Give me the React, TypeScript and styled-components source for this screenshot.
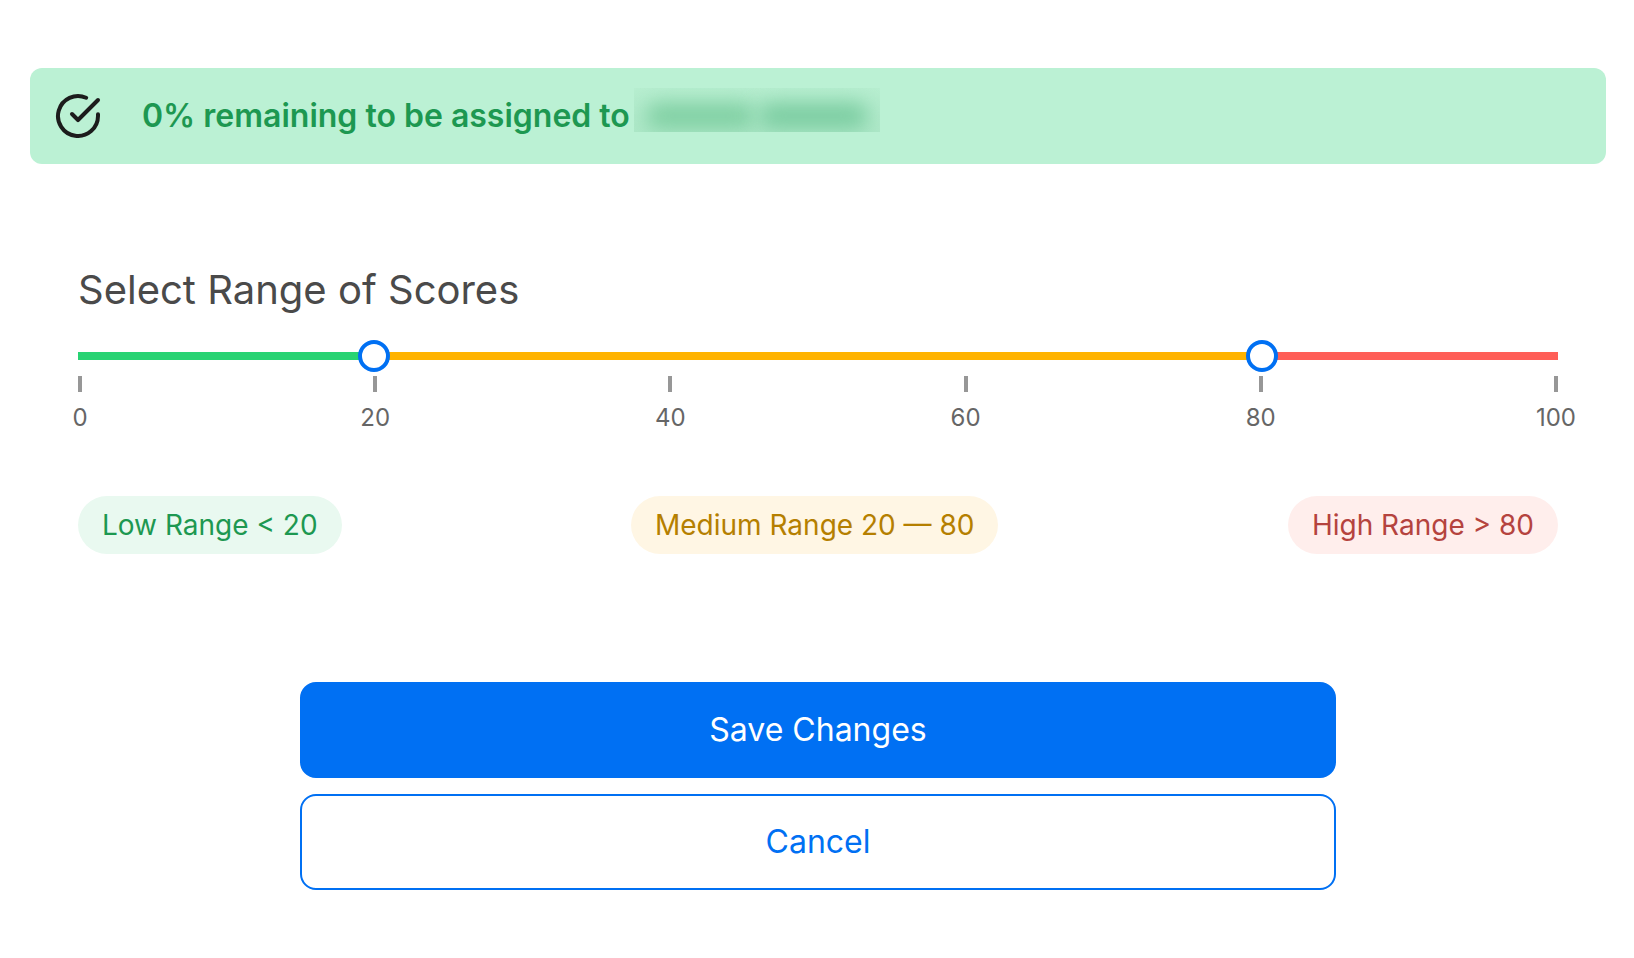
import React, { useState } from "react";
import styled, { createGlobalStyle } from "styled-components";

const GlobalStyle = createGlobalStyle`
  *, *::before, *::after { box-sizing: border-box; }
  body {
    margin: 0;
    background: #ffffff;
    font-family: Inter, "Liberation Sans", sans-serif;
    -webkit-font-smoothing: antialiased;
  }
`;

const Page = styled.main`
  padding: 68px 28px 68px 30px;
`;

const Banner = styled.div`
  display: flex;
  align-items: center;
  gap: 40px;
  min-height: 96px;
  padding: 0 24px;
  border-radius: 12px;
  background: #bbf1d4;
`;

const StatusIcon = styled.svg`
  flex: none;
  width: 48px;
  height: 48px;
  fill: none;
  stroke: #1c1c1c;
  stroke-width: 2;
  stroke-linecap: round;
  stroke-linejoin: round;
`;

const BannerText = styled.p`
  display: flex;
  align-items: center;
  gap: 4px;
  margin: 0;
  color: #1d9851;
  font-size: 32px;
  font-weight: 600;
  line-height: 40px;
`;

const Redacted = styled.span`
  display: flex;
  align-items: center;
  gap: 4px;
  width: 246px;
  height: 44px;
  margin-bottom: 12px;
  padding: 12px 12px 0;
  overflow: hidden;
  background: linear-gradient(#b7eed0, #aee8c8);
`;

const RedactedWord = styled.span<{ $color: string }>`
  flex: 1;
  height: 26px;
  border-radius: 12px;
  background: ${(p) => p.$color};
  filter: blur(10px);
`;

const Panel = styled.form`
  padding: 100px 48px 0;
`;

const Scores = styled.fieldset`
  min-width: 0;
  margin: 0;
  padding: 0;
  border: 0;
`;

const Title = styled.legend`
  padding: 0;
  color: #4a4a4a;
  font-size: 40px;
  font-weight: 400;
  line-height: 52px;
`;

const Slider = styled.div`
  position: relative;
  display: flex;
  align-items: center;
  height: 32px;
  margin-top: 24px;
`;

const Track = styled.div`
  display: flex;
  width: 100%;
  height: 8px;
`;

const Segment = styled.span<{ $color: string }>`
  background: ${(p) => p.$color};
`;

const Thumb = styled.input`
  position: absolute;
  top: 0;
  left: -16px;
  width: calc(100% + 32px);
  height: 32px;
  margin: 0;
  appearance: none;
  background: transparent;
  pointer-events: none;

  &::-webkit-slider-thumb {
    appearance: none;
    width: 32px;
    height: 32px;
    border: 4px solid #0070f3;
    border-radius: 50%;
    background: #ffffff;
    cursor: pointer;
    pointer-events: auto;
  }
`;

const Scale = styled.div`
  display: flex;
  justify-content: space-between;
  margin-top: 4px;
`;

const Tick = styled.div`
  display: flex;
  flex-direction: column;
  align-items: center;
  gap: 10px;
  width: 4px;
  color: #666666;
  font-size: 24px;
  line-height: 32px;

  &::before {
    content: "";
    width: 4px;
    height: 16px;
    background: #979797;
  }
`;

const Ranges = styled.div`
  display: flex;
  justify-content: space-between;
  margin-top: 62px;
`;

const Pill = styled.output<{ $color: string; $background: string }>`
  padding: 12px 24px;
  border-radius: 32px;
  color: ${(p) => p.$color};
  background: ${(p) => p.$background};
  font-size: 28px;
  line-height: 34px;
`;

const Actions = styled.div`
  display: flex;
  flex-direction: column;
  gap: 16px;
  width: 70%;
  margin: 128px auto 0;
`;

const Button = styled.button<{ $primary?: boolean }>`
  height: 96px;
  border: 2px solid #0070f3;
  border-radius: 16px;
  color: ${(p) => (p.$primary ? "#ffffff" : "#0070f3")};
  background: ${(p) => (p.$primary ? "#0070f3" : "#ffffff")};
  font-family: inherit;
  font-size: 32px;
  font-weight: 400;
  line-height: 40px;
  cursor: pointer;
`;

const ticks = [0, 20, 40, 60, 80, 100];

export default function App() {
  const [low, setLow] = useState(20);
  const [high, setHigh] = useState(80);

  return (
    <>
      <GlobalStyle />
      <Page>
        <Banner role="status">
          <StatusIcon viewBox="0 0 24 24" aria-hidden="true">
            <path d="M22 11.08V12a10 10 0 1 1-5.93-9.14" />
            <polyline points="22 4 12 14.01 9 11.01" />
          </StatusIcon>
          <BannerText>
            0% remaining to be assigned to
            <Redacted aria-hidden="true">
              <RedactedWord $color="#7fcfa2" />
              <RedactedWord $color="#7accA0" />
            </Redacted>
          </BannerText>
        </Banner>

        <Panel onSubmit={(e) => e.preventDefault()}>
          <Scores>
            <Title>Select Range of Scores</Title>
            <Slider>
              <Track>
                <Segment $color="#28d373" style={{ width: `${low}%` }} />
                <Segment $color="#ffb300" style={{ width: `${high - low}%` }} />
                <Segment $color="#ff5e57" style={{ width: `${100 - high}%` }} />
              </Track>
              <Thumb
                id="low-limit"
                type="range"
                aria-label="Low range limit"
                value={low}
                onChange={(e) => setLow(Math.min(Number(e.target.value), high))}
              />
              <Thumb
                id="high-limit"
                type="range"
                aria-label="High range limit"
                value={high}
                onChange={(e) => setHigh(Math.max(Number(e.target.value), low))}
              />
            </Slider>
            <Scale aria-hidden="true">
              {ticks.map((tick) => (
                <Tick key={tick}>
                  <span>{tick}</span>
                </Tick>
              ))}
            </Scale>
          </Scores>

          <Ranges>
            <Pill htmlFor="low-limit" $color="#1d9851" $background="#e9f9f0">
              {`Low Range < ${low}`}
            </Pill>
            <Pill htmlFor="low-limit high-limit" $color="#b57f00" $background="#fff6e4">
              {`Medium Range ${low} — ${high}`}
            </Pill>
            <Pill htmlFor="high-limit" $color="#b5433e" $background="#ffeeec">
              {`High Range > ${high}`}
            </Pill>
          </Ranges>

          <Actions>
            <Button type="submit" $primary>
              Save Changes
            </Button>
            <Button type="button">Cancel</Button>
          </Actions>
        </Panel>
      </Page>
    </>
  );
}
